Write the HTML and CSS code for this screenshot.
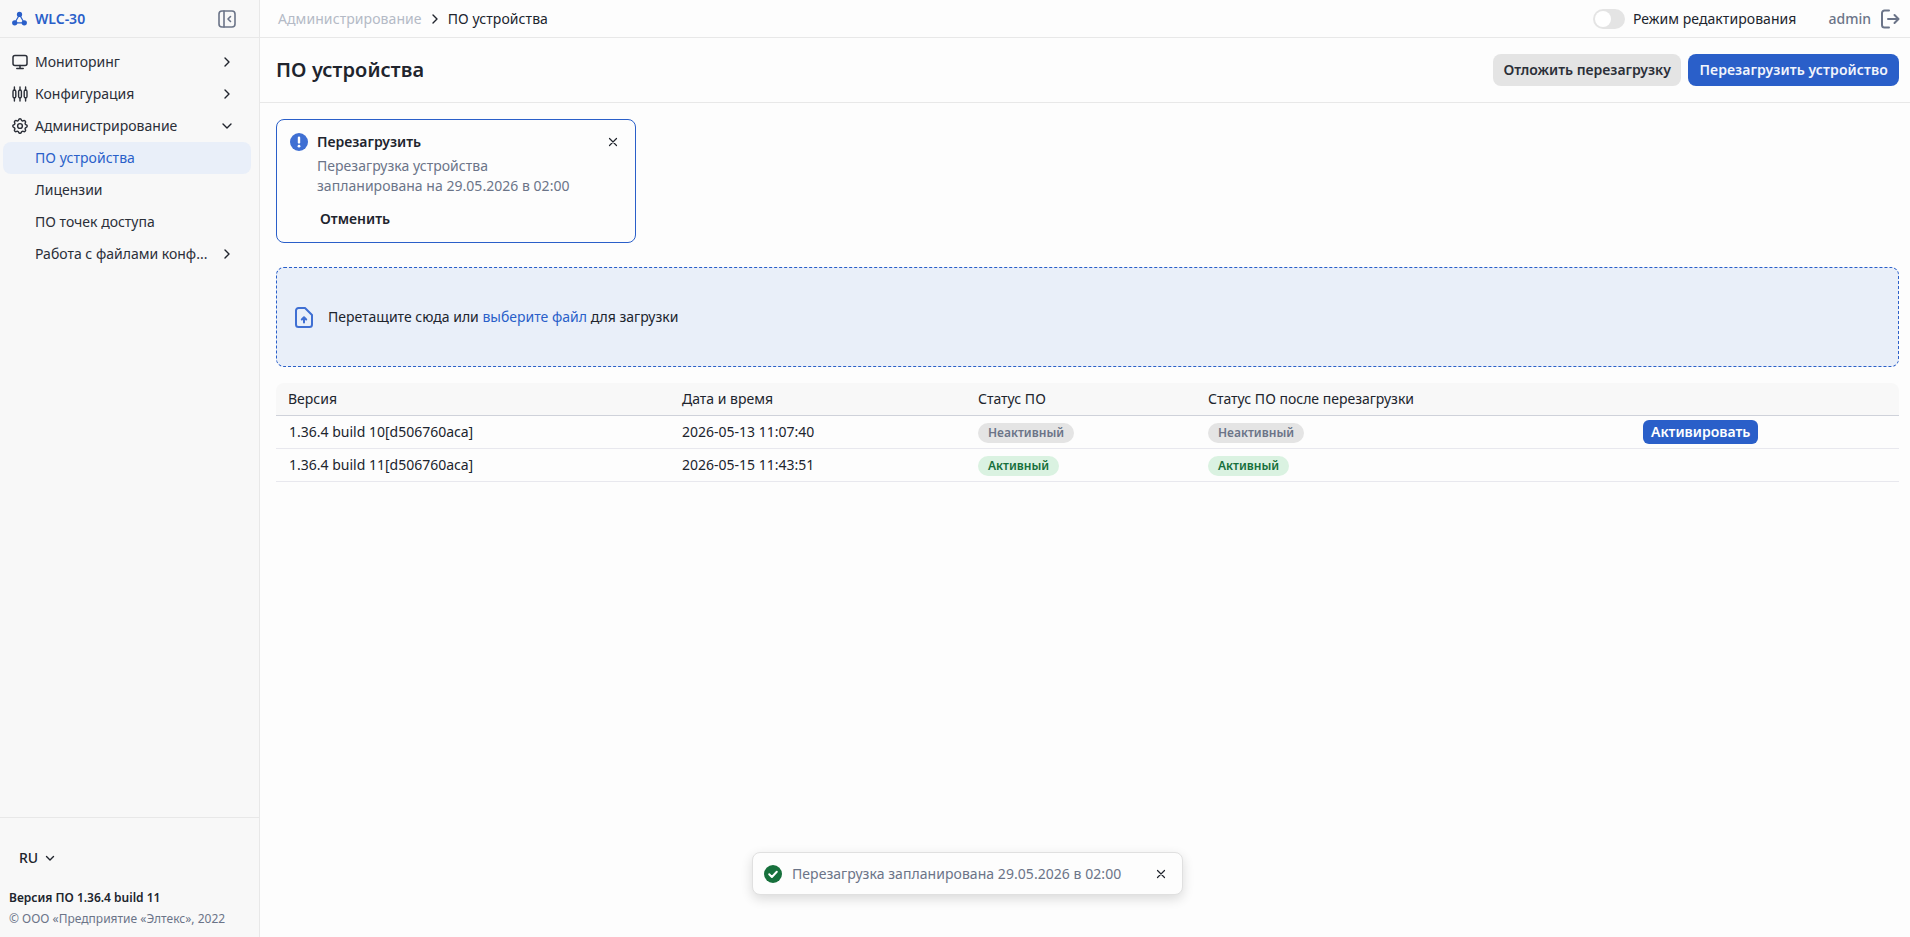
FILE: index.html
```html
<!DOCTYPE html>
<html lang="ru">
  <head>
    <meta charset="UTF-8" />
    <title>ПО устройства</title>
    <link rel="stylesheet" href="styles.css">
  </head>
  <body>
    <div class="app">
      <aside class="sidebar">
        <div class="brand">
          <svg class="brand-icon" width="15" height="15" viewBox="0 0 16 16" fill="#2a5fc9">
            <circle cx="8" cy="3.6" r="2.800"/><circle cx="2.900" cy="12.600" r="2.800"/><circle cx="13.100" cy="12.600" r="2.800"/>
            <path d="M8 4 3 12.600h10Z" fill="none" stroke="#2a5fc9" stroke-width="1.300"/>
          </svg>
          <span class="brand-name">WLC-30</span>
          <svg class="collapse" width="18" height="18" viewBox="0 0 18 18" fill="none" stroke="#6b7488" stroke-width="1.600" stroke-linecap="round" stroke-linejoin="round">
            <rect x="1" y="1" width="16" height="16" rx="3"/><path d="M6 1v16M12.500 6.500 10 9l2.500 2.500"/>
          </svg>
        </div>
        <nav class="menu">
          <a class="menu-item">
            <svg class="menu-icon" width="16" height="16" viewBox="0 0 16 16" fill="none" stroke="#2b2f38" stroke-width="1.500" stroke-linecap="round" stroke-linejoin="round">
              <rect x="1" y="1.600" width="14" height="9.800" rx="2"/><path d="M8 11.400v3M4.800 14.400h6.400"/>
            </svg>
            <span class="menu-label">Мониторинг</span>
            <svg class="chev" width="12" height="12" viewBox="0 0 12 12"><path d="M4 2l4 4-4 4"/></svg>
          </a>
          <a class="menu-item">
            <svg class="menu-icon" width="16" height="16" viewBox="0 0 16 16" fill="none" stroke="#2b2f38" stroke-width="1.400" stroke-linecap="round">
              <rect x="1" y="4" width="2.800" height="8" rx="1.400"/><rect x="6.600" y="4" width="2.800" height="8" rx="1.400"/><rect x="12.200" y="4" width="2.800" height="8" rx="1.400"/>
              <path d="M2.400 1v3M2.400 12v3M8 1v3M8 12v3M13.600 1v3M13.600 12v3"/>
            </svg>
            <span class="menu-label">Конфигурация</span>
            <svg class="chev" width="12" height="12" viewBox="0 0 12 12"><path d="M4 2l4 4-4 4"/></svg>
          </a>
          <a class="menu-item">
            <svg class="menu-icon" width="16" height="16" viewBox="2 2 20 20" fill="none" stroke="#2b2f38" stroke-width="1.800" stroke-linecap="round" stroke-linejoin="round">
              <path d="M10.300 4.300c.4-1.800 3-1.800 3.400 0a1.700 1.700 0 0 0 2.600 1.100c1.500-1 3.300.9 2.400 2.400a1.700 1.700 0 0 0 1 2.600c1.800.4 1.800 3 0 3.400a1.700 1.700 0 0 0-1 2.600c.9 1.500-.9 3.300-2.400 2.400a1.700 1.700 0 0 0-2.600 1c-.4 1.800-3 1.800-3.400 0a1.700 1.700 0 0 0-2.600-1c-1.500.9-3.300-.9-2.400-2.400a1.700 1.700 0 0 0-1-2.600c-1.800-.4-1.800-3 0-3.400a1.700 1.700 0 0 0 1-2.600c-.9-1.500.9-3.300 2.400-2.400a1.700 1.700 0 0 0 2.600-1.100Z"/>
              <circle cx="12" cy="12" r="3"/>
            </svg>
            <span class="menu-label">Администрирование</span>
            <svg class="chev" width="12" height="12" viewBox="0 0 12 12"><path d="M2 4l4 4 4-4"/></svg>
          </a>
          <a class="menu-item sub active"><span class="menu-label">ПО устройства</span></a>
          <a class="menu-item sub"><span class="menu-label">Лицензии</span></a>
          <a class="menu-item sub"><span class="menu-label">ПО точек доступа</span></a>
          <a class="menu-item sub">
            <span class="menu-label">Работа с файлами конф...</span>
            <svg class="chev" width="12" height="12" viewBox="0 0 12 12"><path d="M4 2l4 4-4 4"/></svg>
          </a>
        </nav>
        <div class="side-foot">
          <div class="lang">RU
            <svg class="chev" width="12" height="12" viewBox="0 0 12 12"><path d="M2.500 4.500 6 8l3.500-3.500"/></svg>
          </div>
          <div class="fw-version">Версия ПО 1.36.4 build 11</div>
          <div class="copyright">© ООО «Предприятие «Элтекс», 2022</div>
        </div>
      </aside>

      <div class="main">
        <header class="topbar">
          <div class="crumbs">
            <span class="crumb-parent">Администрирование</span>
            <svg class="chev" width="12" height="12" viewBox="0 0 12 12"><path d="M4 2l4 4-4 4"/></svg>
            <span>ПО устройства</span>
          </div>
          <div class="topbar-right">
            <span class="switch"><span class="knob"></span></span>
            <span class="edit-mode">Режим редактирования</span>
            <span class="user">admin</span>
            <svg width="20" height="20" viewBox="0 0 20 20" fill="none" stroke="#6b7488" stroke-width="2" stroke-linecap="round" stroke-linejoin="round">
              <path d="M9 1.500H4.500a2.500 2.500 0 0 0-2.500 2.500v12a2.500 2.500 0 0 0 2.500 2.500H9M8 10h10M14.500 6l4 4-4 4"/>
            </svg>
          </div>
        </header>

        <div class="page-head">
          <h1>ПО устройства</h1>
          <div class="page-actions">
            <button class="btn btn-gray">Отложить перезагрузку</button>
            <button class="btn btn-blue">Перезагрузить устройство</button>
          </div>
        </div>

        <div class="content">
          <div class="notice">
            <svg class="notice-icon" width="18" height="18" viewBox="0 0 18 18">
              <circle cx="9" cy="9" r="9" fill="#3f6fd3"/>
              <rect x="7.800" y="3.600" width="2.400" height="7" rx="1.200" fill="#fff"/><circle cx="9" cy="13.200" r="1.400" fill="#fff"/>
            </svg>
            <div class="notice-body">
              <div class="notice-title">Перезагрузить</div>
              <div class="notice-text">Перезагрузка устройства<br>запланирована на 29.05.2026 в 02:00</div>
              <div class="notice-cancel">Отменить</div>
            </div>
            <svg class="close" width="10" height="10" viewBox="0 0 10 10"><path d="M1.500 1.500l7 7M8.500 1.500l-7 7"/></svg>
          </div>

          <div class="dropzone">
            <svg width="18" height="21" viewBox="0 0 18 21" fill="none" stroke="#3f6fd3" stroke-width="2" stroke-linejoin="round" stroke-linecap="round">
              <path d="M3.500 1h6.500l7 7v9.500a2.500 2.500 0 0 1-2.500 2.500h-11A2.500 2.500 0 0 1 1 17.500v-14A2.500 2.500 0 0 1 3.500 1Z"/>
              <path d="M9 15.500v-5M6.800 12.500 9 10.300l2.200 2.200"/>
            </svg>
            <span>Перетащите сюда или <span class="link">выберите файл</span> для загрузки</span>
          </div>

          <table class="fw-table">
            <colgroup>
              <col class="col-version"><col class="col-date"><col class="col-status"><col class="col-after"><col>
            </colgroup>
            <thead>
              <tr><th>Версия</th><th>Дата и время</th><th>Статус ПО</th><th>Статус ПО после перезагрузки</th><th></th></tr>
            </thead>
            <tbody>
              <tr>
                <td>1.36.4 build 10[d506760aca]</td>
                <td>2026-05-13 11:07:40</td>
                <td><span class="tag tag-off">Неактивный</span></td>
                <td><span class="tag tag-off">Неактивный</span></td>
                <td><button class="btn-small">Активировать</button></td>
              </tr>
              <tr>
                <td>1.36.4 build 11[d506760aca]</td>
                <td>2026-05-15 11:43:51</td>
                <td><span class="tag tag-on">Активный</span></td>
                <td><span class="tag tag-on">Активный</span></td>
                <td></td>
              </tr>
            </tbody>
          </table>
        </div>
      </div>
    </div>

    <div class="toast">
      <svg width="18" height="18" viewBox="0 0 18 18">
        <circle cx="9" cy="9" r="9" fill="#17703c"/>
        <path d="M5.200 9.300 7.900 12l4.900-5.200" fill="none" stroke="#fff" stroke-width="2" stroke-linecap="round" stroke-linejoin="round"/>
      </svg>
      <span class="toast-text">Перезагрузка запланирована 29.05.2026 в 02:00</span>
      <svg class="close" width="10" height="10" viewBox="0 0 10 10"><path d="M1.500 1.500l7 7M8.500 1.500l-7 7"/></svg>
    </div>
  </body>
</html>
```

FILE: styles.css
```css
* {
  box-sizing: border-box;
}
html,
body {
  margin: 0;
  height: 100%;
}
body {
  font-family: "Noto Sans", sans-serif;
  font-size: 14px;
  line-height: 20px;
  color: #20242d;
  background-color: #fdfdfd;
  overflow: hidden;
}
svg {
  flex: none;
  display: block;
}
.chev {
  fill: none;
  stroke: #20242d;
  stroke-width: 1.4;
  stroke-linecap: round;
  stroke-linejoin: round;
}
.close {
  fill: none;
  stroke: #20242d;
  stroke-width: 1.2;
  stroke-linecap: round;
}
.app {
  display: flex;
  height: 937px;
}

/* sidebar */
.sidebar {
  width: 260px;
  flex: none;
  display: flex;
  flex-direction: column;
  background-color: #f8f8f8;
  border-right: 1px solid #e8e8e8;
}
.brand {
  height: 38px;
  display: flex;
  align-items: center;
  padding: 0 23px 0 12px;
  border-bottom: 1px solid #e8e8e8;
}
.brand-name {
  margin-left: 8px;
  font-weight: 600;
  color: #2a5fc9;
}
.collapse {
  margin-left: auto;
}
.menu {
  padding-top: 8px;
  display: flex;
  flex-direction: column;
}
.menu-item {
  height: 32px;
  margin: 0 8px 0 3px;
  padding: 0 18px 0 9px;
  display: flex;
  align-items: center;
  border-radius: 8px;
  color: #2b2f38;
}
.menu-icon {
  margin-right: 7px;
}
.menu-item.sub {
  padding-left: 32px;
}
.menu-item.active {
  background-color: #e9eff9;
  color: #2a5fc9;
  letter-spacing: 0.05px;
}
.menu-label {
  flex: 1;
  min-width: 0;
  white-space: nowrap;
}
.side-foot {
  margin-top: auto;
  border-top: 1px solid #e8e8e8;
  padding: 30px 9px 8px;
}
.lang {
  display: flex;
  align-items: center;
  gap: 6px;
  margin-left: 10px;
  font-weight: 500;
}
.fw-version {
  margin-top: 20px;
  font-size: 12px;
  font-weight: 600;
}
.copyright {
  margin-top: 1px;
  font-size: 12px;
  color: #6b7488;
}

/* main */
.main {
  flex: 1;
  min-width: 0;
  display: flex;
  flex-direction: column;
}
.topbar {
  height: 38px;
  flex: none;
  display: flex;
  align-items: center;
  justify-content: space-between;
  padding: 0 10px 0 18px;
  border-bottom: 1px solid #e8e8e8;
}
.crumbs {
  display: flex;
  align-items: center;
  gap: 7px;
  letter-spacing: 0.08px;
}
.crumb-parent {
  color: #b4bac6;
}
.topbar-right {
  display: flex;
  align-items: center;
}
.switch {
  width: 32px;
  height: 20px;
  padding: 2px;
  border-radius: 10px;
  background-color: #e4e4e4;
}
.knob {
  display: block;
  width: 16px;
  height: 16px;
  border-radius: 50%;
  background-color: #fff;
}
.edit-mode {
  margin-left: 8px;
  letter-spacing: 0.06px;
}
.user {
  margin: 0 9px 0 32px;
  font-weight: 500;
  color: #6b7488;
}
.page-head {
  height: 65px;
  flex: none;
  display: flex;
  align-items: center;
  justify-content: space-between;
  padding: 0 11px 1px 16px;
  border-bottom: 1px solid #e8e8e8;
}
h1 {
  margin: 0;
  font-size: 20px;
  line-height: 28px;
  font-weight: 600;
  letter-spacing: 0.08px;
}
.page-actions {
  display: flex;
  gap: 7px;
}
.btn {
  height: 32px;
  padding: 0 10px;
  border: 0;
  border-radius: 8px;
  font: 600 14px/20px "Noto Sans", sans-serif;
}
.btn-gray {
  padding: 0 10.5px;
  background-color: #e4e4e4;
  color: #2b2f38;
}
.btn-blue {
  padding: 0 11px;
  letter-spacing: 0.1px;
  background-color: #2a5fc9;
  color: #f2f5fc;
}
.content {
  padding: 16px 11px 0 16px;
}
.notice {
  width: 360px;
  height: 124px;
  display: flex;
  padding: 13px 17px 0 13px;
  border: 1px solid #2a5fc9;
  border-radius: 8px;
}
.notice-body {
  flex: 1;
  margin-left: 9px;
}
.notice-title {
  margin-top: -1px;
  font-weight: 600;
}
.notice-text {
  margin-top: 4px;
  color: #6b7488;
  letter-spacing: 0.03px;
}
.notice-cancel {
  margin: 13px 0 0 3px;
  font-weight: 600;
}
.notice .close {
  margin-top: 4px;
}
.dropzone {
  height: 100px;
  margin-top: 24px;
  display: flex;
  align-items: center;
  gap: 15px;
  padding: 0 18px;
  border: 1px dashed #2a5fc9;
  border-radius: 8px;
  background-color: #e9eff9;
}
.link {
  color: #2a5fc9;
}
.fw-table {
  width: 100%;
  margin-top: 16px;
  table-layout: fixed;
  border-collapse: separate;
  border-spacing: 0;
}
.col-version {
  width: 394px;
}
.col-date {
  width: 296px;
}
.col-status {
  width: 230px;
}
.col-after {
  width: 435px;
}
.fw-table th {
  height: 33px;
  padding: 0 12px;
  text-align: left;
  font-weight: 400;
  background-color: #f8f8f8;
  border-bottom: 1px solid #cfd2da;
}
.fw-table th:first-child {
  border-top-left-radius: 8px;
}
.fw-table th:last-child {
  border-top-right-radius: 8px;
}
.fw-table td {
  height: 33px;
  padding: 0 12px;
  border-bottom: 1px solid #e8e8ee;
}
.fw-table td:first-child {
  padding-left: 13px;
}
.tag {
  display: inline-block;
  vertical-align: middle;
  padding: 0 10px;
  border-radius: 10px;
  font-size: 12px;
  font-weight: 600;
  line-height: 20px;
}
.tag-off {
  background-color: #e4e4e4;
  color: #6b7488;
}
.tag-on {
  background-color: #daf2e1;
  color: #17703c;
}
.btn-small {
  display: block;
  height: 24px;
  padding: 0 8px;
  border: 0;
  border-radius: 6px;
  background-color: #2a5fc9;
  color: #fff;
  font: 600 14px/20px "Noto Sans", sans-serif;
}

/* toast sits over the page */
.toast {
  position: absolute;
  left: 752px;
  top: 852px;
  width: 431px;
  height: 43px;
  display: flex;
  align-items: center;
  padding: 0 16px 0 11px;
  background-color: #fdfdfd;
  border: 1px solid #e0e0e0;
  border-radius: 8px;
  box-shadow: 0 4px 12px rgba(0, 0, 0, 0.14);
}
.toast-text {
  flex: 1;
  margin-left: 10px;
  color: #6b7488;
  letter-spacing: 0.05px;
}
```
